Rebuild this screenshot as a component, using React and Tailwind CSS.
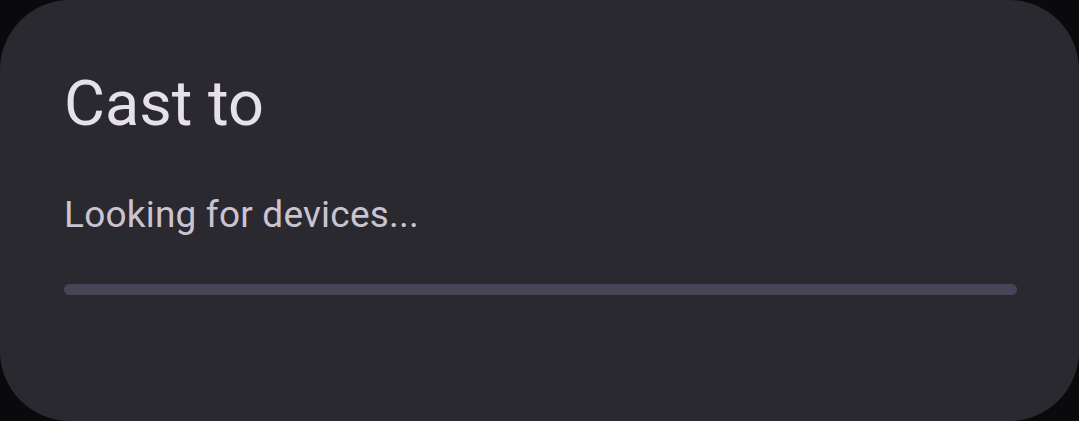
import React from 'react';

const App = () => {
    return (
        <div className="w-[1079px] h-[421px] bg-[#0a0a0c] overflow-hidden" style={{ fontFamily: 'Roboto, "Noto Sans", sans-serif' }}>
            <div className="w-full h-full bg-[#2b2930] rounded-[70px] px-[64px] pt-[72px]">
                {/* Title */}
                <h1 className="text-[63px] leading-[64px] text-[#e6e0e9] font-normal">Cast to</h1>

                {/* Status */}
                <p className="mt-[57px] text-[37px] leading-[44px] tracking-[0.2px] text-[#cac4d0]">Looking for devices...</p>

                {/* Indeterminate progress track */}
                <div className="mt-[47px] h-[11px] w-[953px] rounded-full bg-[#4a4458]"></div>
            </div>
        </div>
    );
};

export default App;
